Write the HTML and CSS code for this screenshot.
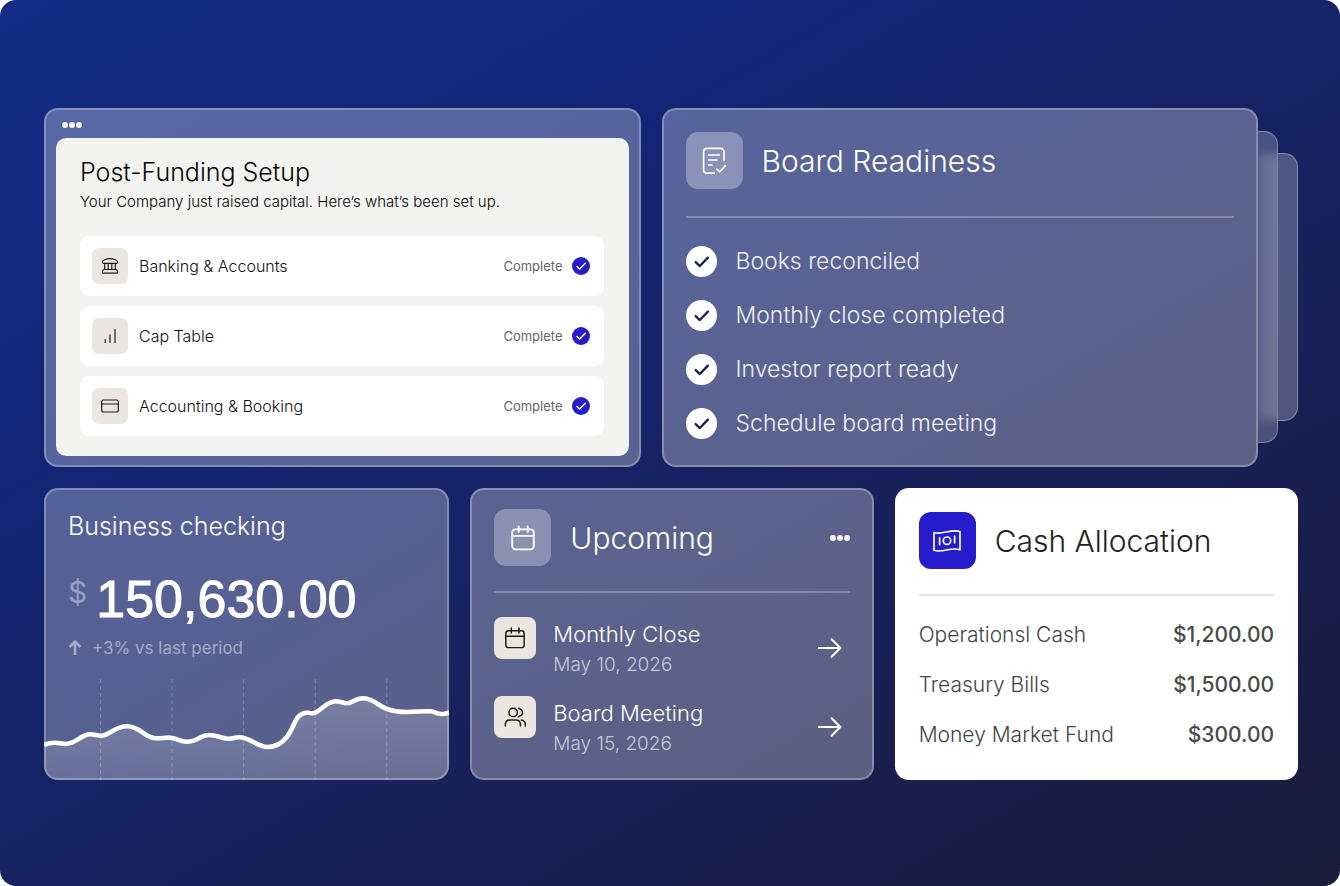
FILE: index.html
```html
<!DOCTYPE html>
<html lang="en">
<head>
<meta charset="utf-8">
<meta name="viewport" content="width=device-width, initial-scale=1">
<title>Finance overview</title>
<link rel="stylesheet" href="styles.css">
</head>
<body>
<svg class="sprite" aria-hidden="true">
  <symbol id="tick" viewBox="0 0 32 32"><path d="M10 16.6l4.3 4.1L22.6 12"/></symbol>
  <symbol id="tick-s" viewBox="0 0 18 18"><path d="M5 9.500l2.700 2.500 5.600-5.700"/></symbol>
  <symbol id="calendar" viewBox="0 0 24 24"><rect x="2" y="4" width="20" height="18.5" rx="3"/><path d="M2 10h20M8 1.2v5.3M16.4 1.2v5.3"/></symbol>
  <symbol id="arrow" viewBox="0 0 24 20"><path d="M0 10h22.5M13.6 1.2L22.4 10l-8.8 8.8"/></symbol>
</svg>
<main class="stage">
  <div class="row row-top">
    <section class="card glass setup">
      <button class="dots" type="button" aria-label="Window menu"><i></i><i></i><i></i></button>
      <div class="sheet">
        <h2 class="sheet-title">Post-Funding Setup</h2>
        <p class="sheet-text">Your Company just raised capital. Here’s what’s been set up.</p>
        <ul class="tasks">
          <li class="task">
            <span class="tile tile-s"><svg class="icon-s" viewBox="0 0 18 18"><path d="M1.6 5.6V4.4C1.6 3 6 1.6 9 1.6s7.400 1.400 7.400 2.800v1.200c0 .5-.3.7-.8.700H2.400c-.5 0-.8-.2-.8-.7zM3.700 6.400v6M7.200 6.400v6M10.800 6.400v6M14.300 6.400v6M3.200 12.500h11.600c1 0 1.600.7 1.600 1.600v1.400c0 .4-.2.6-.6.600H2.200c-.4 0-.6-.2-.6-.6v-1.400c0-.9.600-1.600 1.600-1.600z"/></svg></span>
            <span class="task-name">Banking &amp; Accounts</span>
            <span class="status">Complete</span>
            <svg class="check check-s"><use href="#tick-s"/></svg>
          </li>
          <li class="task">
            <span class="tile tile-s"><svg class="icon-s" viewBox="0 0 18 18"><path d="M4.200 12.500v3M9 7.800v7.700M14 2.600v12.900"/></svg></span>
            <span class="task-name">Cap Table</span>
            <span class="status">Complete</span>
            <svg class="check check-s"><use href="#tick-s"/></svg>
          </li>
          <li class="task">
            <span class="tile tile-s"><svg class="icon-s" viewBox="0 0 18 18"><rect x=".7" y="3" width="16.600" height="12" rx="1.600"/><path d="M.7 7h16.600"/></svg></span>
            <span class="task-name">Accounting &amp; Booking</span>
            <span class="status">Complete</span>
            <svg class="check check-s"><use href="#tick-s"/></svg>
          </li>
        </ul>
      </div>
    </section>
    <div class="stack">
      <div class="layer layer-mid"></div>
      <div class="layer layer-back"></div>
      <section class="card glass board">
        <header class="head">
          <span class="tile tile-l"><svg class="icon-l" viewBox="0 0 28 28"><path d="M24 13.500V5.200C24 3 22.800 1.400 20.500 1.400h-13C5 1.400 3.600 3 3.600 5.200v17.200c0 2.200 1.400 3.800 3.900 3.800h6.800M8.600 8h10.800M8.600 13h8.400M8.600 18h3.400M16.800 22.200l3 2.600 5.600-6.200"/></svg></span>
          <h2 class="head-title">Board Readiness</h2>
        </header>
        <ul class="checks">
          <li class="checks-item"><svg class="check check-l"><use href="#tick"/></svg>Books reconciled</li>
          <li class="checks-item"><svg class="check check-l"><use href="#tick"/></svg>Monthly close completed</li>
          <li class="checks-item"><svg class="check check-l"><use href="#tick"/></svg>Investor report ready</li>
          <li class="checks-item"><svg class="check check-l"><use href="#tick"/></svg>Schedule board meeting</li>
        </ul>
      </section>
    </div>
  </div>
  <div class="row row-bottom">
    <section class="card account">
      <h2 class="account-title">Business checking</h2>
      <p class="amount"><span class="currency">$</span>150,630.00</p>
      <p class="trend"><svg class="up" viewBox="0 0 14 16"><path d="M7 15V2M1.500 7L7 1.600 12.500 7"/></svg>+3% vs last period</p>
      <svg class="chart" viewBox="0 0 405 101" preserveAspectRatio="none" role="img" aria-label="Balance over time">
        <defs><linearGradient id="area" x1="0" y1="0" x2="0" y2="1"><stop offset="0" stop-color="#fff" stop-opacity=".2"/><stop offset="1" stop-color="#fff" stop-opacity=".1"/></linearGradient></defs>
        <path class="guides" d="M56.500 0v101M128 0v101M199.500 0v101M271 0v101M342.500 0v101"/>
        <path fill="url(#area)" d="M0 66C4 64 7 63.700 11 63.700S18 65 22 65C32 65 37 55.300 46 55.300C51 55.300 53 57 57.700 56.700C66 56 71 47.300 82.700 47.300C97 47.300 100 59.300 113 59.300C119 59.300 121 58.400 126 58.700C132 59 136 62.700 142.700 62.700C153 62.700 156 56 165 56C173 56 178 59.700 184 59.700C189 59.700 191 58 196 58.300C206 59 214 68 223.300 68C230 68 237 65 242.700 58C251 47 251 34 262.700 33.700C266 33.600 268 35 271 33.700C277 31 283 22.300 291.700 22.300C296 22.300 299 24.500 303.300 24.300C308 24 311 19.300 318.700 19.300C329 19.300 333 26.500 342.700 30C348 32 354 33 363 33C372 33 379 31.800 386 32.300C391 32.700 392 35 397.700 35C401 35 402 34.500 405 33.300V101H0z"/>
        <path class="line" d="M0 66C4 64 7 63.700 11 63.700S18 65 22 65C32 65 37 55.300 46 55.300C51 55.300 53 57 57.700 56.700C66 56 71 47.300 82.700 47.300C97 47.300 100 59.300 113 59.300C119 59.300 121 58.400 126 58.700C132 59 136 62.700 142.700 62.700C153 62.700 156 56 165 56C173 56 178 59.700 184 59.700C189 59.700 191 58 196 58.300C206 59 214 68 223.300 68C230 68 237 65 242.700 58C251 47 251 34 262.700 33.700C266 33.600 268 35 271 33.700C277 31 283 22.300 291.700 22.300C296 22.300 299 24.500 303.300 24.300C308 24 311 19.300 318.700 19.300C329 19.300 333 26.500 342.700 30C348 32 354 33 363 33C372 33 379 31.800 386 32.300C391 32.700 392 35 397.700 35C401 35 402 34.500 405 33.300"/>
      </svg>
    </section>
    <section class="card glass upcoming">
      <header class="head">
        <span class="tile tile-l"><svg class="icon-l" viewBox="-1 -1 26 26"><use href="#calendar" width="24" height="24"/></svg></span>
        <h2 class="head-title">Upcoming</h2>
        <button class="dots" type="button" aria-label="More"><i></i><i></i><i></i></button>
      </header>
      <ul class="events">
        <li class="event">
          <span class="tile tile-m"><svg class="icon-m"><use href="#calendar"/></svg></span>
          <div class="event-body"><h3 class="event-name">Monthly Close</h3><p class="event-date">May 10, 2026</p></div>
          <a class="go" href="#monthly-close" aria-label="Open Monthly Close"><svg class="arrow"><use href="#arrow"/></svg></a>
        </li>
        <li class="event">
          <span class="tile tile-m"><svg class="icon-m" viewBox="0 0 24 24"><circle cx="10" cy="7" r="4.600"/><path d="M1.500 21.800v-1.600c0-3.200 2-5 5-5h6.400c3 0 5 1.800 5 5v1.600M15.800 2.400c3 1 4.400 2.600 4.400 4.800s-1.400 3.700-4.400 4.600M19 15.200c2.700.6 4.300 2.300 4.300 5v1.600"/></svg></span>
          <div class="event-body"><h3 class="event-name">Board Meeting</h3><p class="event-date">May 15, 2026</p></div>
          <a class="go" href="#board-meeting" aria-label="Open Board Meeting"><svg class="arrow"><use href="#arrow"/></svg></a>
        </li>
      </ul>
    </section>
    <section class="card allocation">
      <header class="head">
        <span class="tile tile-l"><svg class="icon-l" viewBox="0 0 28 28"><path d="M1 5.500c8 2.800 17-4 26-1v18.200c-9-3-18 3.600-26 .6zM6.600 10.800v6.800M21.600 9.200v6.600"/><circle cx="14" cy="13.700" r="3.700"/></svg></span>
        <h2 class="head-title">Cash Allocation</h2>
      </header>
      <table class="funds">
        <tr><th scope="row">Operationsl Cash</th><td>$1,200.00</td></tr>
        <tr><th scope="row">Treasury Bills</th><td>$1,500.00</td></tr>
        <tr><th scope="row">Money Market Fund</th><td>$300.00</td></tr>
      </table>
    </section>
  </div>
</main>
</body>
</html>
```
FILE: styles.css
```css
* { box-sizing: border-box; }
body { margin: 0; background: #fff; color: #fff; font-family: Inter, "Liberation Sans", sans-serif; font-weight: 300; }
h2, h3, p, ul { margin: 0; padding: 0; font-weight: 300; }
ul { list-style: none; }
svg { display: block; flex: none; fill: none; stroke: currentColor; stroke-linecap: round; stroke-linejoin: round; }
.sprite { position: absolute; width: 0; height: 0; }

.stage {
  display: flex; flex-direction: column; justify-content: center; gap: 21px;
  min-height: 100vh; padding: 44px 42px 42px 44px; border-radius: 16px;
  background: linear-gradient(150deg, #142c86 0%, #122577 28%, #18225f 56%, #1b1b3a 100%);
}
.row { display: grid; }
.row-top { grid-template-columns: 1fr 1fr; gap: 21px; padding-right: 40px; }
.row-bottom { grid-template-columns: 405fr 403fr 403fr; gap: 21px; }
.card { border-radius: 14px; }
.glass { border: 2px solid rgba(255, 255, 255, .27); background: rgba(255, 255, 255, .29); }

.tile { display: grid; place-items: center; flex: none; background: #ebe6df; color: #1c1c1c; }
.tile-s { width: 36px; height: 36px; border-radius: 7px; }
.tile-m { width: 42px; height: 42px; border-radius: 8px; }
.tile-l { width: 57px; height: 57px; border-radius: 12px; background: rgba(255, 255, 255, .3); color: #fff; }
.icon-s { width: 18px; height: 18px; stroke-width: 1.2; }
.icon-m { width: 22px; height: 22px; stroke-width: 1.6; }
.icon-l { width: 28px; height: 28px; stroke-width: 1.7; }
.dots { display: flex; gap: 1px; padding: 0; border: 0; background: none; }
.dots i { width: 6px; height: 6px; border-radius: 50%; background: #f7f7f5; }

.setup { padding: 12px 10px 9px 10px; }
.setup .dots { margin: 0 0 10px 6px; }
.sheet { padding: 18px 25px 20px 24px; border-radius: 10px; background: #f3f3f1; color: #050505; }
.sheet-title { font-size: 25px; line-height: 32px; }
.sheet-text { margin-top: 4px; font-size: 15px; line-height: 20px; }
.tasks { display: grid; gap: 10px; margin-top: 24px; }
.task { display: flex; align-items: center; height: 60px; padding: 0 14px 0 12px; border-radius: 9px; background: #fff; }
.task-name { flex: 1; padding-left: 11px; font-size: 16px; color: #111; }
.status { margin-right: 9px; font-size: 13px; font-weight: 400; color: #666; }
.check { border-radius: 50%; }
.check-s { width: 18px; height: 18px; background: #261ccc; color: #fff; stroke-width: 1.4; }
.check-l { width: 31px; height: 31px; background: #fff; color: #1b2150; stroke-width: 2.4; }

.stack { position: relative; display: grid; }
.layer { position: absolute; width: 20px; border: 1px solid rgba(255, 255, 255, .3); border-left: 0; border-radius: 0 14px 14px 0; overflow: hidden; }
.layer-mid { top: 23px; bottom: 24px; left: 100%; background: rgba(255, 255, 255, .22); }
.layer-mid::after { content: ""; position: absolute; inset: 22px -8px 22px 0; background: linear-gradient(90deg, rgba(255, 255, 255, .14), rgba(255, 255, 255, .24)); filter: blur(4px); }
.layer-back { top: 45px; bottom: 46px; left: calc(100% + 20px); background: rgba(255, 255, 255, .24); }

.head { display: flex; align-items: center; gap: 19px; border-bottom: 2px solid rgba(255, 255, 255, .25); }
.head-title { flex: 1; font-size: 30px; line-height: 36px; }
.board { padding: 22px; }
.board .head { padding-bottom: 27px; }
.checks { display: grid; gap: 23px; margin-top: 28px; }
.checks-item { display: flex; align-items: center; gap: 19px; font-size: 23px; line-height: 31px; color: #edeff6; }

.account {
  display: flex; flex-direction: column; overflow: hidden;
  background: rgba(255, 255, 255, .28);
  box-shadow: inset 0 0 0 2px rgba(255, 255, 255, .27);
}
.account-title { padding: 22px 24px 0; font-size: 25px; line-height: 32px; }
.amount {
  display: flex; align-items: flex-start; gap: 9px; padding: 27px 24px 0;
  font-family: "Liberation Sans", Arial, sans-serif; font-size: 52px; line-height: 60px; font-weight: 400;
  -webkit-text-stroke: 1px currentColor;
}
.currency { font-family: Inter, sans-serif; font-size: 30px; line-height: 46px; color: #98a1c4; -webkit-text-stroke: 0; }
.trend { display: flex; align-items: center; gap: 10px; padding: 7px 24px 0; font-size: 17px; line-height: 24px; font-weight: 400; color: #a4abc8; }
.up { width: 14px; height: 16px; stroke-width: 2.6; stroke-linecap: butt; stroke-linejoin: miter; }
.chart { width: 100%; height: 101px; margin-top: auto; stroke: none; }
.guides { stroke: rgba(255, 255, 255, .24); stroke-width: 1; stroke-dasharray: 4 3; stroke-linecap: butt; }
.line { stroke: #fff; stroke-width: 4.6; stroke-linecap: butt; }

.upcoming { padding: 19px 22px 20px; }
.upcoming .head { padding-bottom: 25px; }
.events { display: grid; gap: 17px; margin-top: 24px; }
.event { display: flex; gap: 17px; }
.event-body { flex: 1; }
.event-name { font-size: 22px; line-height: 34px; }
.event-date { font-size: 19px; line-height: 28px; color: #c6c9da; }
.go { align-self: center; margin-right: 8px; color: #fff; }
.arrow { width: 24px; height: 20px; stroke-width: 2; }

.allocation { padding: 24px 24px 20px; background: #fff; color: #222; }
.allocation .head { padding-bottom: 25px; border-color: #e6e6e6; }
.allocation .tile-l { background: #261ccc; }
.funds { width: 100%; margin-top: 13px; border-collapse: collapse; }
.funds th, .funds td { height: 50px; padding: 0; }
.funds th { text-align: left; font-size: 21px; font-weight: 300; color: #444; }
.funds td { text-align: right; font-size: 21px; font-weight: 500; color: #4a4a4a; }
```
